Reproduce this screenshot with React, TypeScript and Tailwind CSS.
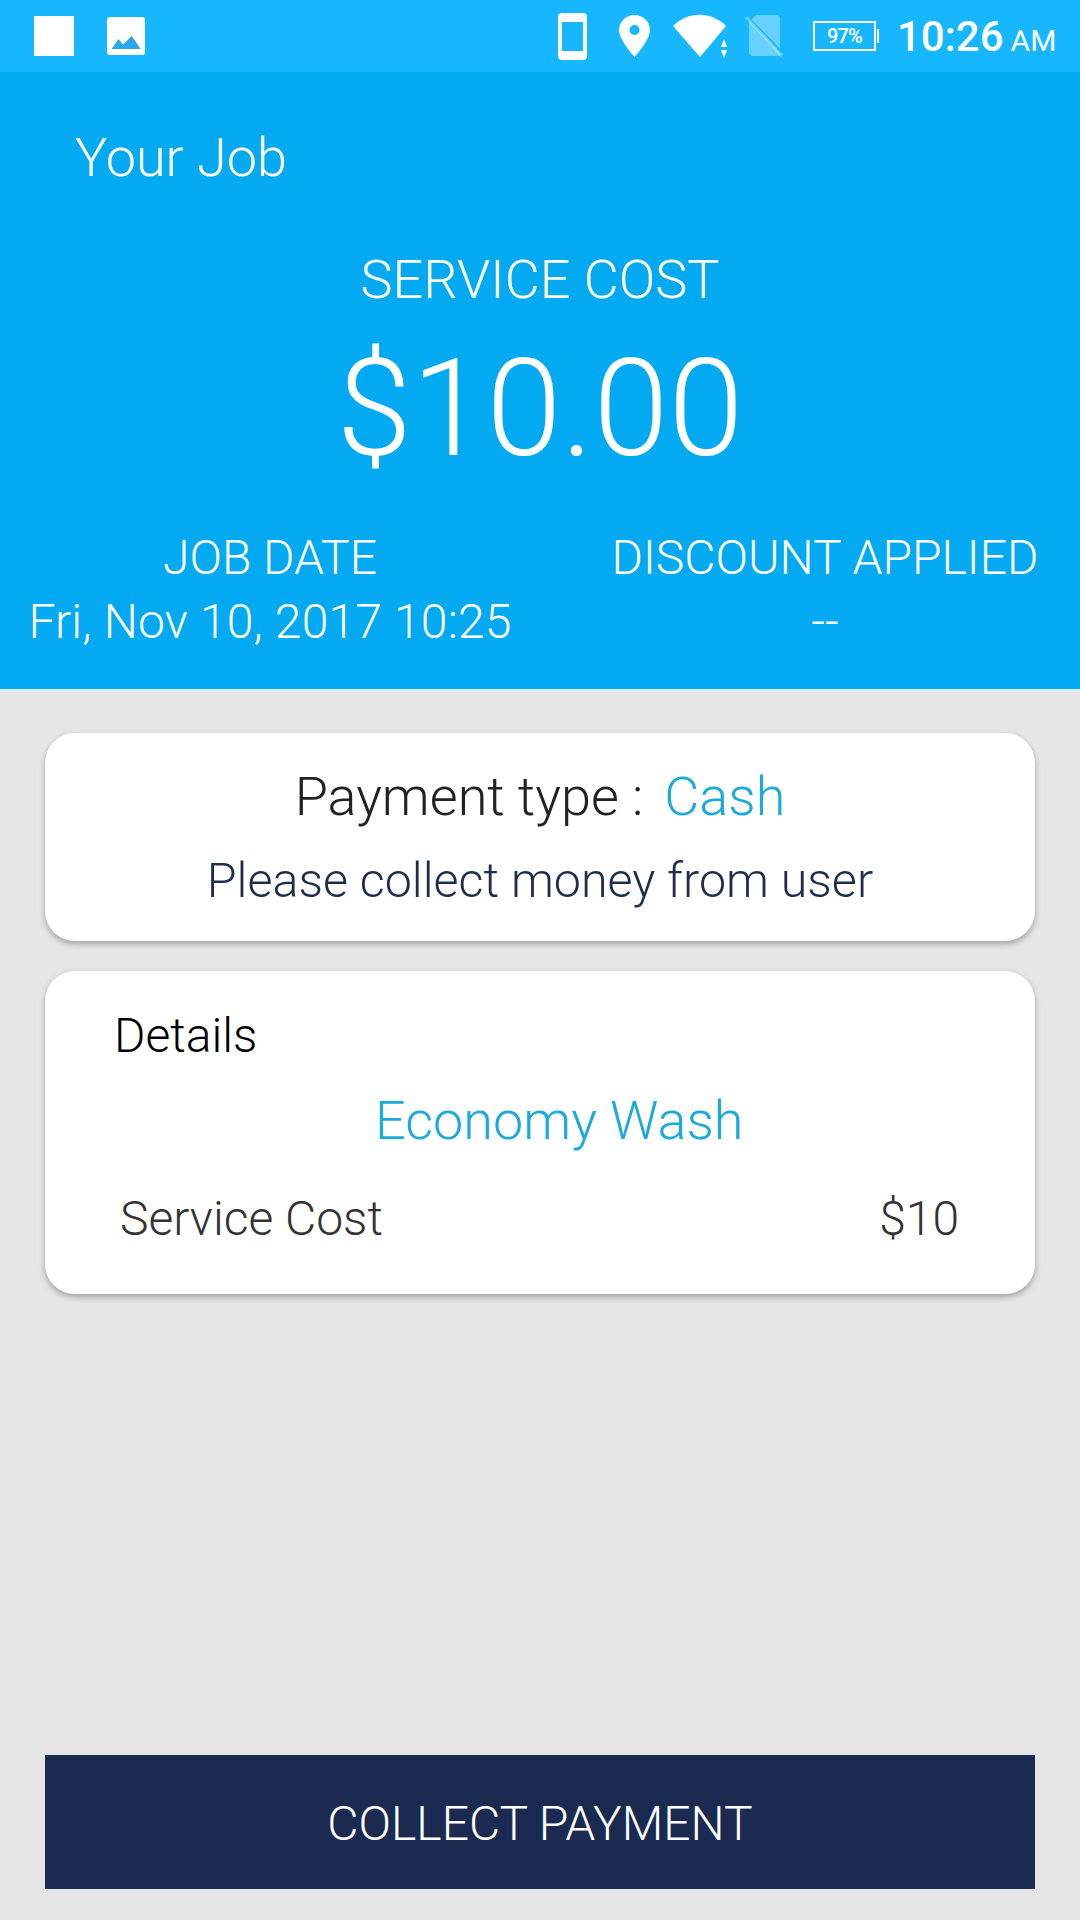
import React from "react";

const roboto = { fontFamily: "Roboto, sans-serif" };

function StatusBar() {
  return (
    <div className="flex h-[72px] items-center bg-[#16b7ff] pl-[34px] text-white">
      <div className="h-[40px] w-[40px] rounded-[1px] bg-white" />
      <svg className="ml-[33px] h-[38px] w-[38px]" viewBox="0 0 38 38">
        <rect width="38" height="38" rx="3" fill="#fff" />
        <path d="M4.5 32 L11.5 22 L16 27.5 L24.7 19 L33.7 32 Z" fill="#2aa9ea" />
      </svg>
      <svg className="ml-[413px] h-[47px] w-[29px]" viewBox="0 0 29 47">
        <rect width="29" height="47" rx="4" fill="#fff" />
        <rect x="4" y="9" width="21" height="29" fill="#16b7ff" />
      </svg>
      <svg className="ml-[32px] h-[42px] w-[31px]" viewBox="0 0 31 42">
        <path d="M15.5 0 C7 0 0 6.7 0 15 C0 25 15.5 42 15.5 42 C15.5 42 31 25 31 15 C31 6.7 24 0 15.5 0 Z" fill="#fff" />
        <circle cx="15.5" cy="15" r="5" fill="#16b7ff" />
      </svg>
      <svg className="ml-[23px] h-[44px] w-[54px]" viewBox="0 0 54 44">
        <path d="M0 12 C15 -3 38 -3 53 12 L27 43 Z" fill="#fff" />
        <path d="M51 25 L54 33 L48 33 Z M48 36 L54 36 L51 44 Z" fill="#fff" />
      </svg>
      <svg className="ml-[18px] h-[42px] w-[38px]" viewBox="0 0 38 42">
        <path d="M11 0 L31 0 Q35 0 35 4 L35 41 L8 41 Q4 41 4 37 L4 7 Z" fill="#fff" opacity="0.35" />
        <path d="M3 3 L37 38" stroke="#16b7ff" strokeWidth="3" />
        <path d="M1 2 L37 41" stroke="#fff" strokeOpacity="0.35" strokeWidth="3" />
      </svg>
      <div className="relative ml-[30px] flex h-[30px] w-[63px] items-center justify-center border-2 border-white">
        <span className="text-[20px] font-medium leading-none tracking-[-0.8px]" style={roboto}>97%</span>
        <div className="absolute right-[-5px] top-[6px] h-[14px] w-[2px] bg-white" />
      </div>
      <span className="ml-[21px] mt-[2px] text-[42px] font-medium leading-none" style={roboto}>10:26</span>
      <span className="ml-[7px] mt-[10px] text-[30px] font-normal leading-none" style={roboto}>AM</span>
    </div>
  );
}

function Header() {
  return (
    <div className="flex h-[617px] flex-col bg-[#03a9f1] text-white" style={roboto}>
      <div className="mt-[51px] pl-[75px] text-[54px] font-light leading-[70px]">Your Job</div>
      <div className="mt-[52px] text-center text-[54px] font-light leading-[70px]">SERVICE COST</div>
      <div className="mt-[19px] text-center text-[135px] font-light leading-[150px]">$10.00</div>
      <div className="mt-[42px] flex text-center text-[48px] font-light leading-[64px]">
        <div className="w-[540px]">
          <div>JOB DATE</div>
          <div className="tracking-[0.2px]">Fri, Nov 10, 2017 10:25</div>
        </div>
        <div className="w-[540px] pl-[30px]">
          <div>DISCOUNT APPLIED</div>
          <div>--</div>
        </div>
      </div>
    </div>
  );
}

export default function App() {
  return (
    <div className="flex h-[1920px] w-[1080px] flex-col overflow-hidden bg-[#e6e6e6]" style={roboto}>
      <StatusBar />
      <Header />
      <div className="h-[3px] bg-[#dff0f8]" />
      <div className="flex flex-1 flex-col px-[45px] pb-[31px] pt-[41px]">
        <div className="h-[208px] rounded-[30px] bg-white pt-[31px] text-center shadow-[0_3px_6px_rgba(0,0,0,0.3)]">
          <div className="text-[54px] font-light leading-[66px] text-[#222222]">
            Payment type :<span className="ml-[21px] text-[#1ca9de]">Cash</span>
          </div>
          <div className="mt-[21px] text-[48.4px] font-light leading-[60px] text-[#1f2d4d]">Please collect money from user</div>
        </div>
        <div className="mt-[30px] h-[323px] rounded-[30px] bg-white pt-[35px] shadow-[0_3px_6px_rgba(0,0,0,0.3)]">
          <div className="pl-[69px] text-[48px] font-light leading-[60px] text-black">Details</div>
          <div className="mt-[22px] pl-[330px] text-[54px] font-light leading-[66px] text-[#1ca9de]">Economy Wash</div>
          <div className="mt-[35px] flex justify-between pl-[75px] pr-[76px] text-[48px] font-light leading-[60px] text-[#333333]">
            <span>Service Cost</span>
            <span>$10</span>
          </div>
        </div>
        <div className="flex-1" />
        <button className="h-[134px] w-full bg-[#1a2a50] pt-[3px] text-center text-[48px] font-light text-white">COLLECT PAYMENT</button>
      </div>
    </div>
  );
}
